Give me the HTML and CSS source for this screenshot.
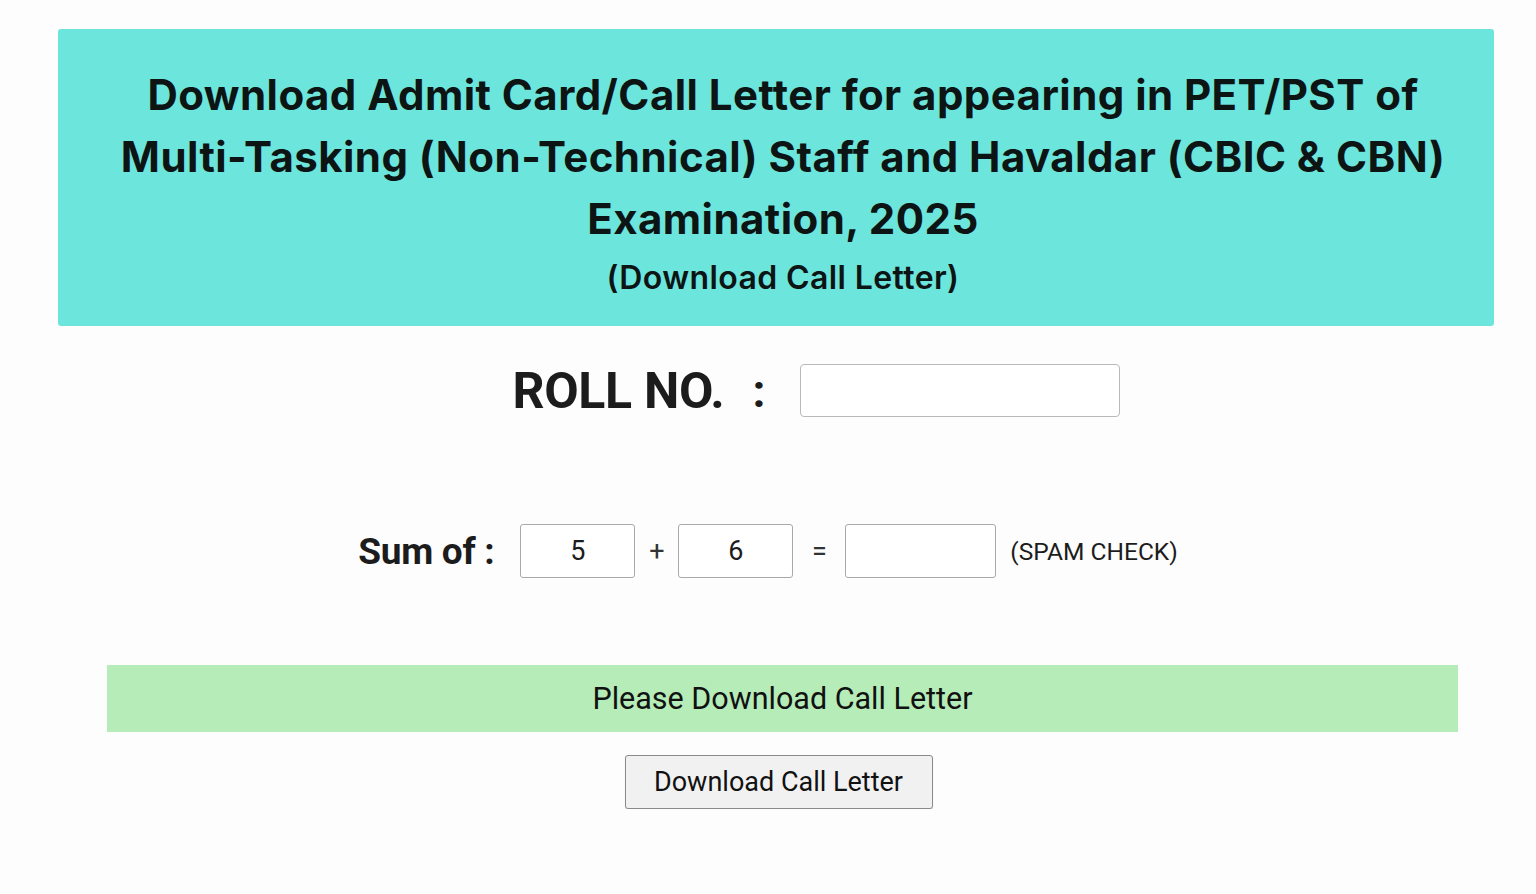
FILE: index.html
```html
<!DOCTYPE html>
<html>
<head>
<meta charset="utf-8">
<link rel="stylesheet" href="styles.css">
</head>
<body>
<div class="page">
  <div class="header">
    <h1 class="title">Download Admit Card/Call Letter for appearing in PET/PST of<br>Multi-Tasking (Non-Technical) Staff and Havaldar (CBIC &amp; CBN)<br>Examination, 2025</h1>
    <div class="subtitle">(Download Call Letter)</div>
  </div>
  <div class="roll-row">
    <span class="roll-label">ROLL NO.</span>
    <span class="roll-colon">:</span>
    <input class="roll-input" type="text">
  </div>
  <div class="sum-row">
    <span class="sum-label">Sum of :</span>
    <div class="num-box">5</div>
    <span class="op op-plus">+</span>
    <div class="num-box">6</div>
    <span class="op op-eq">=</span>
    <input class="ans-input" type="text">
    <span class="spam">(SPAM CHECK)</span>
  </div>
  <div class="notice">Please Download Call Letter</div>
  <div class="btn-row">
    <button class="dl-btn">Download Call Letter</button>
  </div>
</div>
</body>
</html>
```
FILE: styles.css
```css
html, body {
  margin: 0;
  padding: 0;
  background: #fdfdfd;
}
body {
  font-family: Inter, "Liberation Sans", sans-serif;
  color: #111;
}
.page {
  padding-top: 29px;
}
.header {
  margin: 0 42px 0 58px;
  height: 297px;
  box-sizing: border-box;
  background: #6ce5dc;
  border-radius: 3px;
  padding: 35px 0 0 14px;
  text-align: center;
}
.title {
  margin: 0;
  font-size: 42px;
  font-weight: 700;
  line-height: 62px;
  letter-spacing: 0.45px;
  color: #0c1414;
  white-space: nowrap;
}
.subtitle {
  font-size: 32px;
  font-weight: 600;
  line-height: 40px;
  margin-top: 8px;
  letter-spacing: 0.4px;
  color: #0c1414;
}
.roll-row {
  display: flex;
  align-items: center;
  justify-content: center;
  margin-top: 38px;
  height: 53px;
  padding-left: 96px;
}
.roll-label {
  font-family: Roboto, sans-serif;
  font-size: 50px;
  font-weight: 700;
  letter-spacing: -0.3px;
  color: #1c1c1c;
}
.roll-colon {
  font-family: Roboto, sans-serif;
  font-size: 46px;
  font-weight: 700;
  margin: 0 34px 0 28px;
  color: #1c1c1c;
}
.roll-input {
  width: 320px;
  height: 53px;
  box-sizing: border-box;
  border: 1.5px solid #b9b9b9;
  border-radius: 4px;
  background: #fff;
  margin: 0;
}
.sum-row {
  display: flex;
  align-items: center;
  justify-content: center;
  margin-top: 107px;
  height: 54px;
}
.sum-label {
  font-family: Roboto, sans-serif;
  font-size: 37px;
  font-weight: 700;
  letter-spacing: -0.3px;
  color: #1c1c1c;
  margin-right: 26px;
}
.num-box {
  width: 115px;
  height: 54px;
  box-sizing: border-box;
  border: 1.5px solid #a9a9a9;
  border-radius: 3px;
  background: #fff;
  display: flex;
  align-items: center;
  justify-content: center;
  font-family: Roboto, sans-serif;
  font-size: 27px;
  color: #1c1c1c;
}
.op {
  font-family: Roboto, sans-serif;
  font-size: 27px;
  color: #333;
  text-align: center;
}
.op-plus {
  width: 43px;
}
.op-eq {
  width: 52px;
}
.ans-input {
  width: 151px;
  height: 54px;
  box-sizing: border-box;
  border: 1.5px solid #a9a9a9;
  border-radius: 3px;
  background: #fff;
  margin: 0;
}
.spam {
  font-family: Roboto, sans-serif;
  font-size: 24.5px;
  color: #1c1c1c;
  margin-left: 14px;
}
.notice {
  margin: 87px 78px 0 107px;
  height: 67px;
  background: #b5ecb8;
  display: flex;
  align-items: center;
  justify-content: center;
  font-family: Roboto, sans-serif;
  font-size: 30.5px;
  color: #111;
}
.btn-row {
  display: flex;
  justify-content: center;
  margin-top: 23px;
  padding-left: 21px;
}
.dl-btn {
  width: 308px;
  height: 54px;
  font-family: Roboto, sans-serif;
  font-size: 27px;
  color: #111;
  background: #f1f1f1;
  border: 1.5px solid #8a8a8a;
  border-radius: 3px;
  box-shadow: 0 1px 1px rgba(0,0,0,0.15);
}
```
